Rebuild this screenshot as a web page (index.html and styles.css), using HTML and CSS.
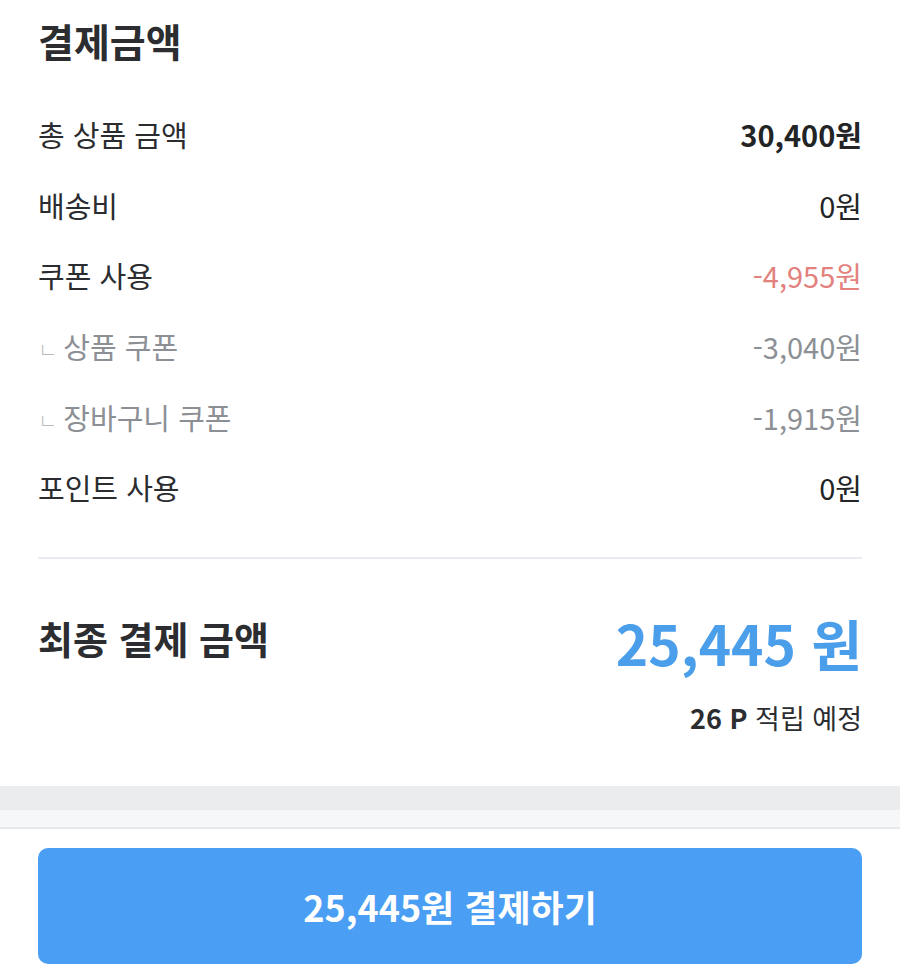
FILE: index.html
```html
<!DOCTYPE html>
<html lang="ko">
<head>
  <meta charset="UTF-8">
  <title>결제금액</title>
  <link rel="stylesheet" href="styles.css">
</head>
<body>
  <div class="section">
    <div class="title">결제금액</div>

    <div class="rows">
      <div class="row">
        <span class="label">총 상품 금액</span>
        <span class="value bold">30,400원</span>
      </div>
      <div class="row">
        <span class="label">배송비</span>
        <span class="value">0원</span>
      </div>
      <div class="row">
        <span class="label">쿠폰 사용</span>
        <span class="value red">-4,955원</span>
      </div>
      <div class="row sub">
        <span class="label"><span class="mark">ㄴ</span>상품 쿠폰</span>
        <span class="value">-3,040원</span>
      </div>
      <div class="row sub">
        <span class="label"><span class="mark">ㄴ</span>장바구니 쿠폰</span>
        <span class="value">-1,915원</span>
      </div>
      <div class="row">
        <span class="label">포인트 사용</span>
        <span class="value">0원</span>
      </div>
    </div>

    <div class="total">
      <div class="total-row">
        <span class="total-label">최종 결제 금액</span>
        <span class="total-value">25,445 원</span>
      </div>
      <div class="point"><b>26 P</b> 적립 예정</div>
    </div>
  </div>

  <div class="gap"></div>

  <div class="bottom">
    <button class="pay">25,445원 결제하기</button>
  </div>
</body>
</html>
```

FILE: styles.css
```css
body {
  margin: 0;
  background: #fff;
  color: #222426;
  font-family: "Noto Sans CJK KR", "Noto Sans", sans-serif;
}

.section {
  padding: 0 38px;
}

.title {
  height: 80px;
  display: flex;
  align-items: center;
  font-size: 39px;
  font-weight: bold;
  color: #2b2d30;
}

.rows {
  padding-top: 19px;
  padding-bottom: 34px;
  border-bottom: 2px solid #e8ebef;
}

.row {
  height: 70.6px;
  display: flex;
  justify-content: space-between;
  align-items: center;
  font-size: 29px;
}

.row .label {
  color: #2a2c2f;
}

.value.bold {
  font-weight: bold;
}

.value.red {
  color: #e2817d;
}

.row.sub .label,
.row.sub .value {
  color: #8c9095;
}

.mark {
  font-size: 21px;
  font-weight: 300;
  color: #b9bdc2;
  margin-right: 6px;
  vertical-align: 2px;
}

.total {
  padding: 43px 0 50px;
}

.total-row {
  display: flex;
  justify-content: space-between;
  align-items: center;
}

.total-label {
  font-size: 38px;
  font-weight: bold;
  color: #2b2d30;
  margin-top: -8px;
}

.total-value {
  font-size: 55px;
  font-weight: bold;
  color: #4b9ee9;
  line-height: 80px;
}

.point {
  text-align: right;
  font-size: 27px;
  line-height: 36px;
  color: #2b2d30;
  margin-top: 18px;
}

.point b {
  font-weight: bold;
}

.gap {
  height: 24px;
  background: #ebecee;
  border-bottom: 17px solid #f6f7f9;
}

.bottom {
  border-top: 2px solid #e6e8eb;
  padding: 19px 38px 14px;
}

.pay {
  display: block;
  width: 100%;
  height: 116px;
  border: none;
  border-radius: 10px;
  background: #4a9ef4;
  color: #fff;
  font-family: "Noto Sans CJK KR", "Noto Sans", sans-serif;
  font-size: 36px;
  font-weight: bold;
}
```
